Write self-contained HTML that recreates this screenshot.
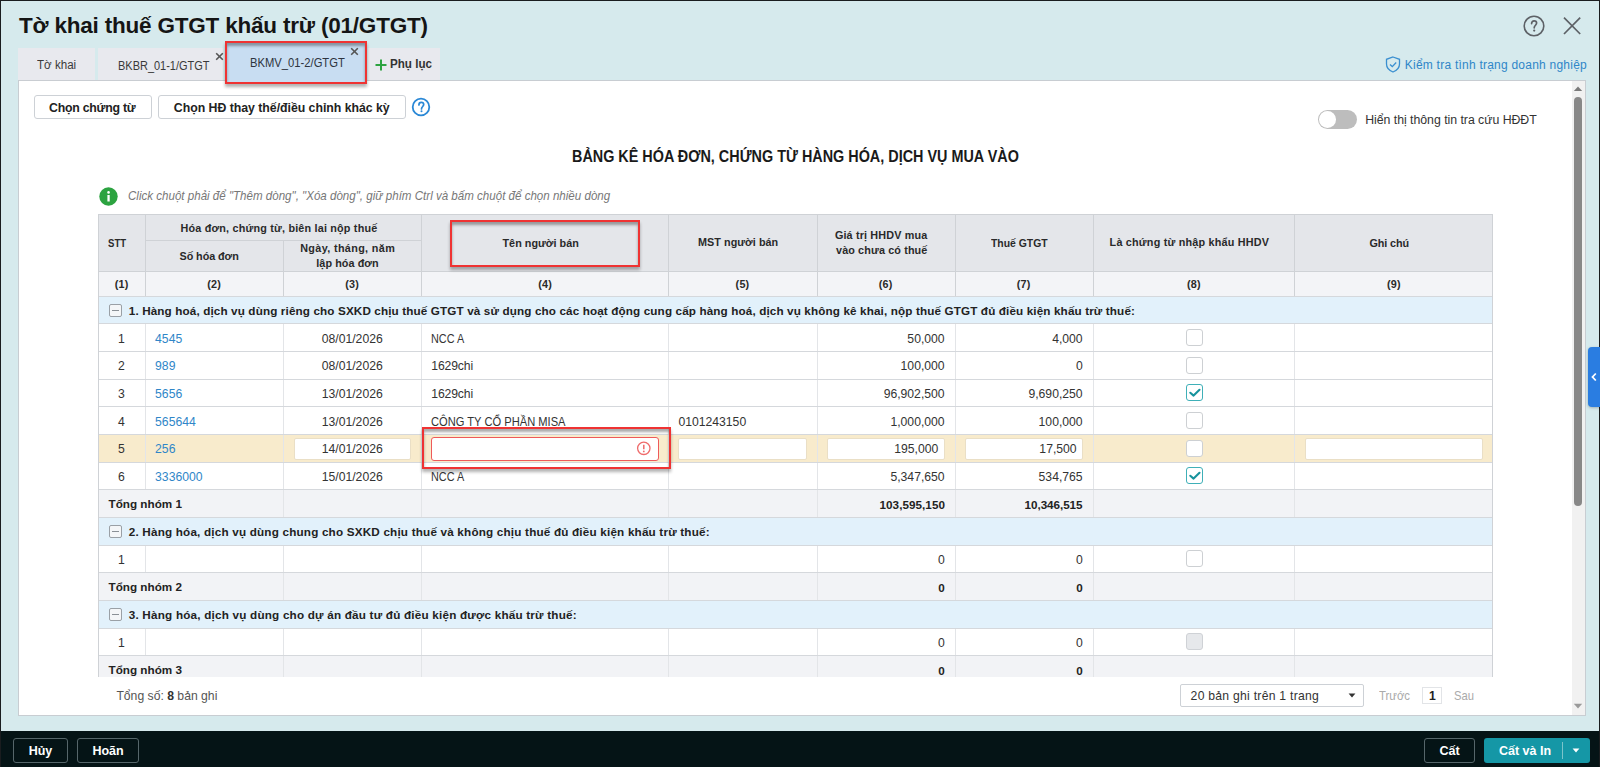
<!DOCTYPE html>
<html><head><meta charset="utf-8"><style>
html,body{margin:0;padding:0;}
body{width:1600px;height:767px;overflow:hidden;position:relative;background:#d6eaed;font-family:"Liberation Sans",sans-serif;}
body>div{position:absolute;}
.t{white-space:nowrap;line-height:1;}
</style></head><body>
<div style="left:18.00px;top:80.00px;width:1568.00px;height:636.00px;background:#fff;border:1px solid #c8cdd2;box-sizing:border-box;"></div>
<div style="left:18.00px;top:48.00px;width:76.50px;height:32.50px;background:#e8e9ee;"></div>
<div style="left:97.50px;top:48.00px;width:125.50px;height:32.50px;background:#e8e9ee;"></div>
<div style="left:368.00px;top:48.00px;width:72.00px;height:32.50px;background:#e8e9ee;"></div>
<div style="left:18.00px;top:80.00px;width:422.00px;height:1.00px;background:#c9cdd2;"></div>
<div style="left:227.00px;top:43.00px;width:137.50px;height:38.50px;background:#c8ddf2;"></div>
<div class="t" style="left:19.00px;top:15.00px;font-size:22.5px;color:#151515;font-weight:700;letter-spacing:-0.201px;">Tờ khai thuế GTGT khấu trừ (01/GTGT)</div>
<div class="t" style="left:37.00px;top:59.00px;font-size:12.5px;color:#3a3a3a;transform:scaleX(0.9278);transform-origin:0.00px 0;">Tờ khai</div>
<div class="t" style="left:117.50px;top:60.00px;font-size:12.5px;color:#3a3a3a;transform:scaleX(0.8782);transform-origin:0.00px 0;">BKBR_01-1/GTGT</div>
<div class="t" style="left:249.50px;top:57.00px;font-size:12.5px;color:#2e3440;transform:scaleX(0.8980);transform-origin:0.00px 0;">BKMV_01-2/GTGT</div>
<div class="t" style="left:390.00px;top:58.00px;font-size:12.5px;color:#333;font-weight:700;transform:scaleX(0.9307);transform-origin:0.00px 0;">Phụ lục</div>
<div class="t" style="left:1404.80px;top:59.00px;font-size:12.0px;color:#2f86c8;letter-spacing:0.230px;">Kiểm tra tình trạng doanh nghiệp</div>
<div style="left:33.50px;top:95.30px;width:118.50px;height:24.20px;border:1px solid #cdd1d6;border-radius:3px;background:#fff;box-sizing:border-box;"></div>
<div style="left:158.30px;top:95.30px;width:247.50px;height:24.20px;border:1px solid #cdd1d6;border-radius:3px;background:#fff;box-sizing:border-box;"></div>
<div class="t" style="left:49.10px;top:102.00px;font-size:12.3px;color:#222;font-weight:700;letter-spacing:-0.245px;">Chọn chứng từ</div>
<div class="t" style="left:173.80px;top:102.00px;font-size:12.3px;color:#222;font-weight:700;letter-spacing:-0.020px;">Chọn HĐ thay thế/điều chỉnh khác kỳ</div>
<div class="t" style="left:1365.20px;top:114.00px;font-size:12.3px;color:#333;letter-spacing:-0.024px;">Hiển thị thông tin tra cứu HĐĐT</div>
<div class="t" style="left:571.90px;top:148.00px;font-size:16.5px;color:#1a1a1a;font-weight:700;transform:scaleX(0.8722);transform-origin:0.00px 0;">BẢNG KÊ HÓA ĐƠN, CHỨNG TỪ HÀNG HÓA, DỊCH VỤ MUA VÀO</div>
<div class="t" style="left:127.50px;top:190.00px;font-size:12.2px;color:#777;font-style:italic;transform:scaleX(0.9490);transform-origin:0.00px 0;">Click chuột phải để &quot;Thêm dòng&quot;, &quot;Xóa dòng&quot;, giữ phím Ctrl và bấm chuột để chọn nhiều dòng</div>
<div style="left:98.00px;top:214.00px;width:1394.60px;height:57.00px;background:#e4e6ea;"></div>
<div style="left:98.00px;top:271.00px;width:1394.60px;height:25.20px;background:#f3f4f7;"></div>
<div style="left:98.00px;top:296.20px;width:1394.60px;height:27.65px;background:#e2f1fb;"></div>
<div style="left:98.00px;top:323.85px;width:1394.60px;height:27.65px;background:#ffffff;"></div>
<div style="left:98.00px;top:351.50px;width:1394.60px;height:27.65px;background:#ffffff;"></div>
<div style="left:98.00px;top:379.15px;width:1394.60px;height:27.65px;background:#ffffff;"></div>
<div style="left:98.00px;top:406.80px;width:1394.60px;height:27.65px;background:#ffffff;"></div>
<div style="left:98.00px;top:434.45px;width:1394.60px;height:27.65px;background:#f8ebcc;"></div>
<div style="left:98.00px;top:462.10px;width:1394.60px;height:27.65px;background:#ffffff;"></div>
<div style="left:98.00px;top:489.75px;width:1394.60px;height:27.65px;background:#f2f3f6;"></div>
<div style="left:98.00px;top:517.40px;width:1394.60px;height:27.65px;background:#e2f1fb;"></div>
<div style="left:98.00px;top:545.05px;width:1394.60px;height:27.65px;background:#ffffff;"></div>
<div style="left:98.00px;top:572.70px;width:1394.60px;height:27.65px;background:#f2f3f6;"></div>
<div style="left:98.00px;top:600.35px;width:1394.60px;height:27.65px;background:#e2f1fb;"></div>
<div style="left:98.00px;top:628.00px;width:1394.60px;height:27.65px;background:#ffffff;"></div>
<div style="left:98.00px;top:655.65px;width:1394.60px;height:21.35px;background:#f2f3f6;"></div>
<div style="left:98.00px;top:214.00px;width:1394.60px;height:1.00px;background:#cfd2d6;"></div>
<div style="left:145.00px;top:240.00px;width:276.00px;height:1.00px;background:#cfd2d6;"></div>
<div style="left:98.00px;top:270.50px;width:1394.60px;height:1.00px;background:#cfd2d6;"></div>
<div style="left:98.00px;top:295.70px;width:1394.60px;height:1.00px;background:#d5d8dc;"></div>
<div style="left:98.00px;top:323.35px;width:1394.60px;height:1.00px;background:#d5d8dc;"></div>
<div style="left:98.00px;top:351.00px;width:1394.60px;height:1.00px;background:#d5d8dc;"></div>
<div style="left:98.00px;top:378.65px;width:1394.60px;height:1.00px;background:#d5d8dc;"></div>
<div style="left:98.00px;top:406.30px;width:1394.60px;height:1.00px;background:#d5d8dc;"></div>
<div style="left:98.00px;top:433.95px;width:1394.60px;height:1.00px;background:#d5d8dc;"></div>
<div style="left:98.00px;top:461.60px;width:1394.60px;height:1.00px;background:#d5d8dc;"></div>
<div style="left:98.00px;top:489.25px;width:1394.60px;height:1.00px;background:#d5d8dc;"></div>
<div style="left:98.00px;top:516.90px;width:1394.60px;height:1.00px;background:#d5d8dc;"></div>
<div style="left:98.00px;top:544.55px;width:1394.60px;height:1.00px;background:#d5d8dc;"></div>
<div style="left:98.00px;top:572.20px;width:1394.60px;height:1.00px;background:#d5d8dc;"></div>
<div style="left:98.00px;top:599.85px;width:1394.60px;height:1.00px;background:#d5d8dc;"></div>
<div style="left:98.00px;top:627.50px;width:1394.60px;height:1.00px;background:#d5d8dc;"></div>
<div style="left:98.00px;top:655.15px;width:1394.60px;height:1.00px;background:#d5d8dc;"></div>
<div style="left:97.50px;top:214.00px;width:1.00px;height:463.00px;background:#cfd2d6;"></div>
<div style="left:144.50px;top:214.00px;width:1.00px;height:82.20px;background:#cfd2d6;"></div>
<div style="left:282.50px;top:240.00px;width:1.00px;height:56.20px;background:#cfd2d6;"></div>
<div style="left:420.50px;top:214.00px;width:1.00px;height:82.20px;background:#cfd2d6;"></div>
<div style="left:667.50px;top:214.00px;width:1.00px;height:82.20px;background:#cfd2d6;"></div>
<div style="left:816.50px;top:214.00px;width:1.00px;height:82.20px;background:#cfd2d6;"></div>
<div style="left:954.50px;top:214.00px;width:1.00px;height:82.20px;background:#cfd2d6;"></div>
<div style="left:1092.50px;top:214.00px;width:1.00px;height:82.20px;background:#cfd2d6;"></div>
<div style="left:1294.00px;top:214.00px;width:1.00px;height:82.20px;background:#cfd2d6;"></div>
<div style="left:1492.10px;top:214.00px;width:1.00px;height:463.00px;background:#cfd2d6;"></div>
<div style="left:144.50px;top:324.35px;width:1.00px;height:26.65px;background:#e3e5e8;"></div>
<div style="left:282.50px;top:324.35px;width:1.00px;height:26.65px;background:#e3e5e8;"></div>
<div style="left:420.50px;top:324.35px;width:1.00px;height:26.65px;background:#e3e5e8;"></div>
<div style="left:667.50px;top:324.35px;width:1.00px;height:26.65px;background:#e3e5e8;"></div>
<div style="left:816.50px;top:324.35px;width:1.00px;height:26.65px;background:#e3e5e8;"></div>
<div style="left:954.50px;top:324.35px;width:1.00px;height:26.65px;background:#e3e5e8;"></div>
<div style="left:1092.50px;top:324.35px;width:1.00px;height:26.65px;background:#e3e5e8;"></div>
<div style="left:1294.00px;top:324.35px;width:1.00px;height:26.65px;background:#e3e5e8;"></div>
<div style="left:144.50px;top:352.00px;width:1.00px;height:26.65px;background:#e3e5e8;"></div>
<div style="left:282.50px;top:352.00px;width:1.00px;height:26.65px;background:#e3e5e8;"></div>
<div style="left:420.50px;top:352.00px;width:1.00px;height:26.65px;background:#e3e5e8;"></div>
<div style="left:667.50px;top:352.00px;width:1.00px;height:26.65px;background:#e3e5e8;"></div>
<div style="left:816.50px;top:352.00px;width:1.00px;height:26.65px;background:#e3e5e8;"></div>
<div style="left:954.50px;top:352.00px;width:1.00px;height:26.65px;background:#e3e5e8;"></div>
<div style="left:1092.50px;top:352.00px;width:1.00px;height:26.65px;background:#e3e5e8;"></div>
<div style="left:1294.00px;top:352.00px;width:1.00px;height:26.65px;background:#e3e5e8;"></div>
<div style="left:144.50px;top:379.65px;width:1.00px;height:26.65px;background:#e3e5e8;"></div>
<div style="left:282.50px;top:379.65px;width:1.00px;height:26.65px;background:#e3e5e8;"></div>
<div style="left:420.50px;top:379.65px;width:1.00px;height:26.65px;background:#e3e5e8;"></div>
<div style="left:667.50px;top:379.65px;width:1.00px;height:26.65px;background:#e3e5e8;"></div>
<div style="left:816.50px;top:379.65px;width:1.00px;height:26.65px;background:#e3e5e8;"></div>
<div style="left:954.50px;top:379.65px;width:1.00px;height:26.65px;background:#e3e5e8;"></div>
<div style="left:1092.50px;top:379.65px;width:1.00px;height:26.65px;background:#e3e5e8;"></div>
<div style="left:1294.00px;top:379.65px;width:1.00px;height:26.65px;background:#e3e5e8;"></div>
<div style="left:144.50px;top:407.30px;width:1.00px;height:26.65px;background:#e3e5e8;"></div>
<div style="left:282.50px;top:407.30px;width:1.00px;height:26.65px;background:#e3e5e8;"></div>
<div style="left:420.50px;top:407.30px;width:1.00px;height:26.65px;background:#e3e5e8;"></div>
<div style="left:667.50px;top:407.30px;width:1.00px;height:26.65px;background:#e3e5e8;"></div>
<div style="left:816.50px;top:407.30px;width:1.00px;height:26.65px;background:#e3e5e8;"></div>
<div style="left:954.50px;top:407.30px;width:1.00px;height:26.65px;background:#e3e5e8;"></div>
<div style="left:1092.50px;top:407.30px;width:1.00px;height:26.65px;background:#e3e5e8;"></div>
<div style="left:1294.00px;top:407.30px;width:1.00px;height:26.65px;background:#e3e5e8;"></div>
<div style="left:144.50px;top:434.95px;width:1.00px;height:26.65px;background:#e3e5e8;"></div>
<div style="left:282.50px;top:434.95px;width:1.00px;height:26.65px;background:#e3e5e8;"></div>
<div style="left:420.50px;top:434.95px;width:1.00px;height:26.65px;background:#e3e5e8;"></div>
<div style="left:667.50px;top:434.95px;width:1.00px;height:26.65px;background:#e3e5e8;"></div>
<div style="left:816.50px;top:434.95px;width:1.00px;height:26.65px;background:#e3e5e8;"></div>
<div style="left:954.50px;top:434.95px;width:1.00px;height:26.65px;background:#e3e5e8;"></div>
<div style="left:1092.50px;top:434.95px;width:1.00px;height:26.65px;background:#e3e5e8;"></div>
<div style="left:1294.00px;top:434.95px;width:1.00px;height:26.65px;background:#e3e5e8;"></div>
<div style="left:144.50px;top:462.60px;width:1.00px;height:26.65px;background:#e3e5e8;"></div>
<div style="left:282.50px;top:462.60px;width:1.00px;height:26.65px;background:#e3e5e8;"></div>
<div style="left:420.50px;top:462.60px;width:1.00px;height:26.65px;background:#e3e5e8;"></div>
<div style="left:667.50px;top:462.60px;width:1.00px;height:26.65px;background:#e3e5e8;"></div>
<div style="left:816.50px;top:462.60px;width:1.00px;height:26.65px;background:#e3e5e8;"></div>
<div style="left:954.50px;top:462.60px;width:1.00px;height:26.65px;background:#e3e5e8;"></div>
<div style="left:1092.50px;top:462.60px;width:1.00px;height:26.65px;background:#e3e5e8;"></div>
<div style="left:1294.00px;top:462.60px;width:1.00px;height:26.65px;background:#e3e5e8;"></div>
<div style="left:282.50px;top:490.25px;width:1.00px;height:26.65px;background:#e3e5e8;"></div>
<div style="left:420.50px;top:490.25px;width:1.00px;height:26.65px;background:#e3e5e8;"></div>
<div style="left:667.50px;top:490.25px;width:1.00px;height:26.65px;background:#e3e5e8;"></div>
<div style="left:816.50px;top:490.25px;width:1.00px;height:26.65px;background:#e3e5e8;"></div>
<div style="left:954.50px;top:490.25px;width:1.00px;height:26.65px;background:#e3e5e8;"></div>
<div style="left:1092.50px;top:490.25px;width:1.00px;height:26.65px;background:#e3e5e8;"></div>
<div style="left:1294.00px;top:490.25px;width:1.00px;height:26.65px;background:#e3e5e8;"></div>
<div style="left:144.50px;top:545.55px;width:1.00px;height:26.65px;background:#e3e5e8;"></div>
<div style="left:282.50px;top:545.55px;width:1.00px;height:26.65px;background:#e3e5e8;"></div>
<div style="left:420.50px;top:545.55px;width:1.00px;height:26.65px;background:#e3e5e8;"></div>
<div style="left:667.50px;top:545.55px;width:1.00px;height:26.65px;background:#e3e5e8;"></div>
<div style="left:816.50px;top:545.55px;width:1.00px;height:26.65px;background:#e3e5e8;"></div>
<div style="left:954.50px;top:545.55px;width:1.00px;height:26.65px;background:#e3e5e8;"></div>
<div style="left:1092.50px;top:545.55px;width:1.00px;height:26.65px;background:#e3e5e8;"></div>
<div style="left:1294.00px;top:545.55px;width:1.00px;height:26.65px;background:#e3e5e8;"></div>
<div style="left:282.50px;top:573.20px;width:1.00px;height:26.65px;background:#e3e5e8;"></div>
<div style="left:420.50px;top:573.20px;width:1.00px;height:26.65px;background:#e3e5e8;"></div>
<div style="left:667.50px;top:573.20px;width:1.00px;height:26.65px;background:#e3e5e8;"></div>
<div style="left:816.50px;top:573.20px;width:1.00px;height:26.65px;background:#e3e5e8;"></div>
<div style="left:954.50px;top:573.20px;width:1.00px;height:26.65px;background:#e3e5e8;"></div>
<div style="left:1092.50px;top:573.20px;width:1.00px;height:26.65px;background:#e3e5e8;"></div>
<div style="left:1294.00px;top:573.20px;width:1.00px;height:26.65px;background:#e3e5e8;"></div>
<div style="left:144.50px;top:628.50px;width:1.00px;height:26.65px;background:#e3e5e8;"></div>
<div style="left:282.50px;top:628.50px;width:1.00px;height:26.65px;background:#e3e5e8;"></div>
<div style="left:420.50px;top:628.50px;width:1.00px;height:26.65px;background:#e3e5e8;"></div>
<div style="left:667.50px;top:628.50px;width:1.00px;height:26.65px;background:#e3e5e8;"></div>
<div style="left:816.50px;top:628.50px;width:1.00px;height:26.65px;background:#e3e5e8;"></div>
<div style="left:954.50px;top:628.50px;width:1.00px;height:26.65px;background:#e3e5e8;"></div>
<div style="left:1092.50px;top:628.50px;width:1.00px;height:26.65px;background:#e3e5e8;"></div>
<div style="left:1294.00px;top:628.50px;width:1.00px;height:26.65px;background:#e3e5e8;"></div>
<div style="left:282.50px;top:656.15px;width:1.00px;height:20.85px;background:#e3e5e8;"></div>
<div style="left:420.50px;top:656.15px;width:1.00px;height:20.85px;background:#e3e5e8;"></div>
<div style="left:667.50px;top:656.15px;width:1.00px;height:20.85px;background:#e3e5e8;"></div>
<div style="left:816.50px;top:656.15px;width:1.00px;height:20.85px;background:#e3e5e8;"></div>
<div style="left:954.50px;top:656.15px;width:1.00px;height:20.85px;background:#e3e5e8;"></div>
<div style="left:1092.50px;top:656.15px;width:1.00px;height:20.85px;background:#e3e5e8;"></div>
<div style="left:1294.00px;top:656.15px;width:1.00px;height:20.85px;background:#e3e5e8;"></div>
<div class="t" style="left:107.70px;top:238.00px;font-size:10.8px;color:#2a2a2a;font-weight:700;transform:scaleX(0.8867);transform-origin:0.00px 0;">STT</div>
<div class="t" style="left:180.50px;top:223.00px;font-size:10.8px;color:#2a2a2a;font-weight:700;letter-spacing:0.190px;">Hóa đơn, chứng từ, biên lai nộp thuế</div>
<div class="t" style="left:179.50px;top:251.00px;font-size:10.8px;color:#2a2a2a;font-weight:700;letter-spacing:-0.065px;">Số hóa đơn</div>
<div class="t" style="left:300.20px;top:243.00px;font-size:10.8px;color:#2a2a2a;font-weight:700;letter-spacing:0.359px;">Ngày, tháng, năm</div>
<div class="t" style="left:316.30px;top:258.00px;font-size:10.8px;color:#2a2a2a;font-weight:700;letter-spacing:0.073px;">lập hóa đơn</div>
<div class="t" style="left:502.50px;top:238.00px;font-size:10.8px;color:#2a2a2a;font-weight:700;letter-spacing:0.018px;">Tên người bán</div>
<div class="t" style="left:698.10px;top:237.00px;font-size:10.8px;color:#2a2a2a;font-weight:700;letter-spacing:0.033px;">MST người bán</div>
<div class="t" style="left:834.90px;top:230.00px;font-size:10.8px;color:#2a2a2a;font-weight:700;letter-spacing:0.158px;">Giá trị HHDV mua</div>
<div class="t" style="left:836.00px;top:245.00px;font-size:10.8px;color:#2a2a2a;font-weight:700;letter-spacing:0.128px;">vào chưa có thuế</div>
<div class="t" style="left:991.30px;top:238.00px;font-size:10.8px;color:#2a2a2a;font-weight:700;transform:scaleX(0.9642);transform-origin:0.00px 0;">Thuế GTGT</div>
<div class="t" style="left:1109.60px;top:237.00px;font-size:10.8px;color:#2a2a2a;font-weight:700;letter-spacing:0.205px;">Là chứng từ nhập khẩu HHDV</div>
<div class="t" style="left:1369.50px;top:238.00px;font-size:10.8px;color:#2a2a2a;font-weight:700;letter-spacing:-0.096px;">Ghi chú</div>
<div class="t" style="left:114.80px;top:279.00px;font-size:10.8px;color:#2a2a2a;font-weight:700;letter-spacing:0.212px;">(1)</div>
<div class="t" style="left:207.20px;top:279.00px;font-size:10.8px;color:#2a2a2a;font-weight:700;letter-spacing:0.212px;">(2)</div>
<div class="t" style="left:345.20px;top:279.00px;font-size:10.8px;color:#2a2a2a;font-weight:700;letter-spacing:0.212px;">(3)</div>
<div class="t" style="left:538.20px;top:279.00px;font-size:10.8px;color:#2a2a2a;font-weight:700;letter-spacing:0.212px;">(4)</div>
<div class="t" style="left:735.60px;top:279.00px;font-size:10.8px;color:#2a2a2a;font-weight:700;letter-spacing:0.212px;">(5)</div>
<div class="t" style="left:878.80px;top:279.00px;font-size:10.8px;color:#2a2a2a;font-weight:700;letter-spacing:0.212px;">(6)</div>
<div class="t" style="left:1016.80px;top:279.00px;font-size:10.8px;color:#2a2a2a;font-weight:700;letter-spacing:0.212px;">(7)</div>
<div class="t" style="left:1187.00px;top:279.00px;font-size:10.8px;color:#2a2a2a;font-weight:700;letter-spacing:0.212px;">(8)</div>
<div class="t" style="left:1387.00px;top:279.00px;font-size:10.8px;color:#2a2a2a;font-weight:700;letter-spacing:0.212px;">(9)</div>
<div class="t" style="left:128.75px;top:305.00px;font-size:11.7px;color:#222;font-weight:700;letter-spacing:0.130px;">1. Hàng hoá, dịch vụ dùng riêng cho SXKD chịu thuế GTGT và sử dụng cho các hoạt động cung cấp hàng hoá, dịch vụ không kê khai, nộp thuế GTGT đủ điều kiện khấu trừ thuế:</div>
<div style="left:109.00px;top:303.60px;width:13.00px;height:13.00px;border:1px solid #9aa0a6;border-radius:2px;background:#f4f6f8;box-sizing:border-box;"></div>
<div style="left:112.00px;top:309.60px;width:7.00px;height:1.00px;background:#8a9096;"></div>
<div class="t" style="left:128.75px;top:526.00px;font-size:11.7px;color:#222;font-weight:700;letter-spacing:0.193px;">2. Hàng hóa, dịch vụ dùng chung cho SXKD chịu thuế và không chịu thuế đủ điều kiện khấu trừ thuế:</div>
<div style="left:109.00px;top:524.80px;width:13.00px;height:13.00px;border:1px solid #9aa0a6;border-radius:2px;background:#f4f6f8;box-sizing:border-box;"></div>
<div style="left:112.00px;top:530.80px;width:7.00px;height:1.00px;background:#8a9096;"></div>
<div class="t" style="left:128.75px;top:609.00px;font-size:11.7px;color:#222;font-weight:700;letter-spacing:0.209px;">3. Hàng hóa, dịch vụ dùng cho dự án đầu tư đủ điều kiện được khấu trừ thuế:</div>
<div style="left:109.00px;top:607.75px;width:13.00px;height:13.00px;border:1px solid #9aa0a6;border-radius:2px;background:#f4f6f8;box-sizing:border-box;"></div>
<div style="left:112.00px;top:613.75px;width:7.00px;height:1.00px;background:#8a9096;"></div>
<div class="t" style="left:907.37px;top:333.00px;font-size:12.2px;color:#333;">50,000</div>
<div class="t" style="left:1052.14px;top:333.00px;font-size:12.2px;color:#333;">4,000</div>
<div class="t" style="left:118.01px;top:333.00px;font-size:12.2px;color:#333;">1</div>
<div class="t" style="left:155.10px;top:333.00px;font-size:12.2px;color:#2f86c8;">4545</div>
<div class="t" style="left:321.72px;top:333.00px;font-size:12.2px;color:#333;">08/01/2026</div>
<div class="t" style="left:431.30px;top:333.00px;font-size:12.2px;color:#333;transform:scaleX(0.8920);transform-origin:0.00px 0;">NCC A</div>
<div style="left:1185.70px;top:329.15px;width:17.00px;height:17.00px;border:1.3px solid #cdd0d3;border-radius:3px;background:#fff;box-sizing:border-box;"></div>
<div class="t" style="left:900.60px;top:360.00px;font-size:12.2px;color:#333;">100,000</div>
<div class="t" style="left:1075.93px;top:360.00px;font-size:12.2px;color:#333;">0</div>
<div class="t" style="left:118.01px;top:360.00px;font-size:12.2px;color:#333;">2</div>
<div class="t" style="left:155.10px;top:360.00px;font-size:12.2px;color:#2f86c8;">989</div>
<div class="t" style="left:321.72px;top:360.00px;font-size:12.2px;color:#333;">08/01/2026</div>
<div class="t" style="left:431.30px;top:360.00px;font-size:12.2px;color:#333;letter-spacing:-0.144px;">1629chi</div>
<div style="left:1185.70px;top:356.80px;width:17.00px;height:17.00px;border:1.3px solid #cdd0d3;border-radius:3px;background:#fff;box-sizing:border-box;"></div>
<div class="t" style="left:883.64px;top:388.00px;font-size:12.2px;color:#333;">96,902,500</div>
<div class="t" style="left:1028.41px;top:388.00px;font-size:12.2px;color:#333;">9,690,250</div>
<div class="t" style="left:118.01px;top:388.00px;font-size:12.2px;color:#333;">3</div>
<div class="t" style="left:155.10px;top:388.00px;font-size:12.2px;color:#2f86c8;">5656</div>
<div class="t" style="left:321.72px;top:388.00px;font-size:12.2px;color:#333;">13/01/2026</div>
<div class="t" style="left:431.30px;top:388.00px;font-size:12.2px;color:#333;letter-spacing:-0.144px;">1629chi</div>
<div style="left:1185.70px;top:384.45px;width:17.00px;height:17.00px;border:1.3px solid #3fb0b8;border-radius:3px;background:#fff;box-sizing:border-box;"></div>
<svg style="position:absolute;left:1185.70px;top:384.45px" width="17" height="17" viewBox="0 0 17 17"><path d="M4.3 8.8 L7.6 11.6 L13.5 5.8" fill="none" stroke="#17939d" stroke-width="2.1" stroke-linecap="round" stroke-linejoin="round"/></svg>
<div class="t" style="left:890.41px;top:416.00px;font-size:12.2px;color:#333;">1,000,000</div>
<div class="t" style="left:1038.60px;top:416.00px;font-size:12.2px;color:#333;">100,000</div>
<div class="t" style="left:118.01px;top:416.00px;font-size:12.2px;color:#333;">4</div>
<div class="t" style="left:155.10px;top:416.00px;font-size:12.2px;color:#2f86c8;">565644</div>
<div class="t" style="left:321.72px;top:416.00px;font-size:12.2px;color:#333;">13/01/2026</div>
<div class="t" style="left:431.30px;top:416.00px;font-size:12.2px;color:#333;transform:scaleX(0.9140);transform-origin:0.00px 0;">CÔNG TY CỔ PHẦN MISA</div>
<div class="t" style="left:678.40px;top:416.00px;font-size:12.2px;color:#333;">0101243150</div>
<div style="left:1185.70px;top:412.10px;width:17.00px;height:17.00px;border:1.3px solid #cdd0d3;border-radius:3px;background:#fff;box-sizing:border-box;"></div>
<div style="left:293.75px;top:437.85px;width:117.50px;height:22.60px;background:#fff;border:1px solid #eadfc6;box-sizing:border-box;border-radius:2px;"></div>
<div style="left:677.90px;top:437.85px;width:129.20px;height:22.60px;background:#fff;border:1px solid #eadfc6;box-sizing:border-box;border-radius:2px;"></div>
<div style="left:827.20px;top:437.85px;width:117.50px;height:22.60px;background:#fff;border:1px solid #eadfc6;box-sizing:border-box;border-radius:2px;"></div>
<div style="left:965.30px;top:437.85px;width:117.40px;height:22.60px;background:#fff;border:1px solid #eadfc6;box-sizing:border-box;border-radius:2px;"></div>
<div style="left:1305.00px;top:437.85px;width:178.00px;height:22.60px;background:#fff;border:1px solid #eadfc6;box-sizing:border-box;border-radius:2px;"></div>
<div style="left:430.75px;top:436.55px;width:228.00px;height:24.20px;background:#fff;border:1px solid #ee5a5a;box-sizing:border-box;border-radius:3px;"></div>
<svg style="position:absolute;left:636px;top:441.15px" width="16" height="16" viewBox="0 0 16 16"><circle cx="7.8" cy="7.3" r="6.2" fill="none" stroke="#ef6b6b" stroke-width="1.3"/><path d="M7.8 3.8 V8.3" stroke="#ef6b6b" stroke-width="1.5"/><circle cx="7.8" cy="10.4" r="0.9" fill="#ef6b6b"/></svg>
<div class="t" style="left:894.20px;top:443.00px;font-size:12.2px;color:#333;">195,000</div>
<div class="t" style="left:1039.37px;top:443.00px;font-size:12.2px;color:#333;">17,500</div>
<div class="t" style="left:118.01px;top:443.00px;font-size:12.2px;color:#333;">5</div>
<div class="t" style="left:155.10px;top:443.00px;font-size:12.2px;color:#2f86c8;">256</div>
<div class="t" style="left:321.72px;top:443.00px;font-size:12.2px;color:#333;">14/01/2026</div>
<div style="left:1185.70px;top:439.75px;width:17.00px;height:17.00px;border:1.3px solid #cdd0d3;border-radius:3px;background:#fff;box-sizing:border-box;"></div>
<div class="t" style="left:890.41px;top:471.00px;font-size:12.2px;color:#333;">5,347,650</div>
<div class="t" style="left:1038.60px;top:471.00px;font-size:12.2px;color:#333;">534,765</div>
<div class="t" style="left:118.01px;top:471.00px;font-size:12.2px;color:#333;">6</div>
<div class="t" style="left:155.10px;top:471.00px;font-size:12.2px;color:#2f86c8;">3336000</div>
<div class="t" style="left:321.72px;top:471.00px;font-size:12.2px;color:#333;">15/01/2026</div>
<div class="t" style="left:431.30px;top:471.00px;font-size:12.2px;color:#333;transform:scaleX(0.8920);transform-origin:0.00px 0;">NCC A</div>
<div style="left:1185.70px;top:467.40px;width:17.00px;height:17.00px;border:1.3px solid #3fb0b8;border-radius:3px;background:#fff;box-sizing:border-box;"></div>
<svg style="position:absolute;left:1185.70px;top:467.40px" width="17" height="17" viewBox="0 0 17 17"><path d="M4.3 8.8 L7.6 11.6 L13.5 5.8" fill="none" stroke="#17939d" stroke-width="2.1" stroke-linecap="round" stroke-linejoin="round"/></svg>
<div class="t" style="left:108.50px;top:498.00px;font-size:11.7px;color:#222;font-weight:700;letter-spacing:0.008px;">Tổng nhóm 1</div>
<div class="t" style="left:879.50px;top:499.00px;font-size:11.7px;color:#222;font-weight:700;letter-spacing:0.045px;">103,595,150</div>
<div class="t" style="left:1024.60px;top:499.00px;font-size:11.7px;color:#222;font-weight:700;letter-spacing:-0.062px;">10,346,515</div>
<div class="t" style="left:108.50px;top:581.00px;font-size:11.7px;color:#222;font-weight:700;letter-spacing:0.008px;">Tổng nhóm 2</div>
<div class="t" style="left:938.21px;top:582.00px;font-size:11.7px;color:#222;font-weight:700;">0</div>
<div class="t" style="left:1076.21px;top:582.00px;font-size:11.7px;color:#222;font-weight:700;">0</div>
<div class="t" style="left:108.50px;top:664.00px;font-size:11.7px;color:#222;font-weight:700;letter-spacing:0.008px;">Tổng nhóm 3</div>
<div class="t" style="left:938.21px;top:665.00px;font-size:11.7px;color:#222;font-weight:700;">0</div>
<div class="t" style="left:1076.21px;top:665.00px;font-size:11.7px;color:#222;font-weight:700;">0</div>
<div class="t" style="left:118.01px;top:554.00px;font-size:12.2px;color:#333;">1</div>
<div class="t" style="left:937.93px;top:554.00px;font-size:12.2px;color:#333;">0</div>
<div class="t" style="left:1075.93px;top:554.00px;font-size:12.2px;color:#333;">0</div>
<div style="left:1185.70px;top:550.35px;width:17.00px;height:17.00px;border:1.3px solid #cdd0d3;border-radius:3px;background:#fff;box-sizing:border-box;"></div>
<div class="t" style="left:118.01px;top:637.00px;font-size:12.2px;color:#333;">1</div>
<div class="t" style="left:937.93px;top:637.00px;font-size:12.2px;color:#333;">0</div>
<div class="t" style="left:1075.93px;top:637.00px;font-size:12.2px;color:#333;">0</div>
<div style="left:1185.70px;top:633.30px;width:17.00px;height:17.00px;border:1px solid #cfd2d6;border-radius:3px;background:#e6e8eb;box-sizing:border-box;"></div>
<div class="t" style="left:116.4px;top:690px;font-size:12.2px;color:#555">Tổng số: <b style="color:#333">8</b> bản ghi</div>
<div style="left:1180.00px;top:684.40px;width:183.60px;height:23.00px;border:1px solid #cdd1d6;border-radius:2px;background:#fff;box-sizing:border-box;"></div>
<div class="t" style="left:1190.60px;top:690.00px;font-size:12.2px;color:#333;letter-spacing:0.255px;">20 bản ghi trên 1 trang</div>
<svg style="position:absolute;left:1348px;top:693px" width="8" height="5" viewBox="0 0 8 5"><path d="M0.6 0.5 H7.4 L4 4.6 Z" fill="#333"/></svg>
<div class="t" style="left:1379.00px;top:690.00px;font-size:12.2px;color:#aaa;transform:scaleX(0.9308);transform-origin:0.00px 0;">Trước</div>
<div style="left:1422.40px;top:687.40px;width:20.00px;height:16.60px;border:1px solid #e2e4e7;background:#fff;box-sizing:border-box;"></div>
<div class="t" style="left:1429.01px;top:690.00px;font-size:12.2px;color:#222;font-weight:700;">1</div>
<div class="t" style="left:1454.40px;top:690.00px;font-size:12.2px;color:#aaa;transform:scaleX(0.9210);transform-origin:0.00px 0;">Sau</div>
<div style="left:1571.50px;top:81.00px;width:13.50px;height:634.00px;background:#f1f1f1;"></div>
<svg style="position:absolute;left:1573px;top:86px" width="10" height="6" viewBox="0 0 10 6"><path d="M5 0.5 L9.2 5 H0.8 Z" fill="#7a7a7a"/></svg>
<svg style="position:absolute;left:1573px;top:703px" width="10" height="6" viewBox="0 0 10 6"><path d="M0.8 0.8 H9.2 L5 5.4 Z" fill="#9a9a9a"/></svg>
<div style="left:1574.00px;top:97.00px;width:7.50px;height:408.60px;background:#888;border-radius:4px;"></div>
<div style="left:1317.90px;top:109.60px;width:39.40px;height:19.30px;background:#bdbdbd;border-radius:10px;"></div>
<div style="left:1319.00px;top:110.80px;width:17.30px;height:17.00px;background:#fff;border-radius:50%;"></div>
<svg style="position:absolute;left:99px;top:186.5px" width="19" height="19" viewBox="0 0 19 19"><circle cx="9.5" cy="9.5" r="9.2" fill="#2ca340"/><rect x="8.4" y="8" width="2.3" height="6.5" fill="#fff"/><circle cx="9.55" cy="5.4" r="1.3" fill="#fff"/></svg>
<svg style="position:absolute;left:410.75px;top:97px" width="20" height="20" viewBox="0 0 20 20"><circle cx="10" cy="10" r="8.3" fill="none" stroke="#2a88d6" stroke-width="1.8"/><path d="M7.9 7.9 C7.9 6.3 8.9 5.4 10.3 5.4 C11.8 5.4 12.7 6.4 12.7 7.6 C12.7 9.4 10.5 9.7 10.5 11.9" fill="none" stroke="#2a88d6" stroke-width="1.7" stroke-linecap="round"/><circle cx="10.5" cy="14.2" r="1.0" fill="#2a88d6"/></svg>
<svg style="position:absolute;left:1522px;top:13.5px" width="24" height="24" viewBox="0 0 24 24"><circle cx="12" cy="12" r="9.8" fill="none" stroke="#5d6166" stroke-width="1.6"/><path d="M9.6 9.6 C9.6 7.8 10.7 6.8 12.1 6.8 C13.6 6.8 14.6 7.8 14.6 9.1 C14.6 11.1 12.2 11.4 12.2 13.8" fill="none" stroke="#5d6166" stroke-width="1.7" stroke-linecap="round"/><circle cx="12.2" cy="16.6" r="1.1" fill="#5d6166"/></svg>
<svg style="position:absolute;left:1562px;top:15.5px" width="20" height="20" viewBox="0 0 20 20"><path d="M2 1.7 L18.2 18 M18.2 1.7 L2 18" fill="none" stroke="#5d6166" stroke-width="1.7"/></svg>
<svg style="position:absolute;left:214.5px;top:52px" width="9" height="9" viewBox="0 0 9 9"><path d="M1.2 1.2 L7.8 7.8 M7.8 1.2 L1.2 7.8" stroke="#555" stroke-width="1.6"/></svg>
<svg style="position:absolute;left:350px;top:47.3px" width="9" height="9" viewBox="0 0 9 9"><path d="M1.2 1.2 L7.8 7.8 M7.8 1.2 L1.2 7.8" stroke="#555" stroke-width="1.6"/></svg>
<svg style="position:absolute;left:374.5px;top:58.5px" width="12" height="12" viewBox="0 0 12 12"><path d="M6 0.5 V11.5 M0.5 6 H11.5" stroke="#2ca340" stroke-width="2"/></svg>
<svg style="position:absolute;left:1385px;top:56px" width="16" height="17" viewBox="0 0 16 17"><path d="M8 1 L14.5 3.3 V8 C14.5 12 11.5 14.6 8 16 C4.5 14.6 1.5 12 1.5 8 V3.3 Z" fill="none" stroke="#3a8fd0" stroke-width="1.3"/><path d="M5 8.5 L7.3 10.6 L11.2 6.5" fill="none" stroke="#3a8fd0" stroke-width="1.3"/></svg>
<div style="left:225.00px;top:41.00px;width:141.50px;height:42.60px;border:2.6px solid #ef3333;box-sizing:border-box;box-shadow:0 3px 3px rgba(0,0,0,.3), inset 0 3px 3px rgba(0,0,0,.34);"></div>
<div style="left:449.60px;top:220.00px;width:190.00px;height:46.50px;border:2.6px solid #ef3333;box-sizing:border-box;box-shadow:0 3px 3px rgba(0,0,0,.3), inset 0 3px 3px rgba(0,0,0,.34);"></div>
<div style="left:421.80px;top:427.20px;width:249.50px;height:41.60px;border:2.6px solid #ef3333;box-sizing:border-box;box-shadow:0 3px 3px rgba(0,0,0,.3), inset 0 3px 3px rgba(0,0,0,.34);"></div>
<div style="left:0.00px;top:731.00px;width:1600.00px;height:36.00px;background:#051416;"></div>
<div style="left:13.00px;top:737.50px;width:55.00px;height:25.50px;border:1px solid #56666a;border-radius:3px;box-sizing:border-box;"></div>
<div style="left:77.00px;top:737.50px;width:62.00px;height:25.50px;border:1px solid #56666a;border-radius:3px;box-sizing:border-box;"></div>
<div style="left:1424.30px;top:737.50px;width:50.40px;height:25.00px;border:1px solid #56666a;border-radius:3px;box-sizing:border-box;"></div>
<div style="left:1484.00px;top:737.50px;width:106.00px;height:25.00px;background:#1597a6;border-radius:3px;"></div>
<div style="left:1561.50px;top:741.50px;width:1.00px;height:17.00px;background:#7cc4ca;"></div>
<svg style="position:absolute;left:1572px;top:747.5px" width="8" height="5" viewBox="0 0 8 5"><path d="M0.6 0.5 H7.4 L4 4.5 Z" fill="#fff"/></svg>
<div class="t" style="left:28.69px;top:745.00px;font-size:12.5px;color:#fff;font-weight:700;">Hủy</div>
<div class="t" style="left:92.38px;top:745.00px;font-size:12.5px;color:#fff;font-weight:700;">Hoãn</div>
<div class="t" style="left:1439.44px;top:745.00px;font-size:12.5px;color:#fff;font-weight:700;">Cất</div>
<div class="t" style="left:1498.94px;top:745.00px;font-size:12.5px;color:#fff;font-weight:700;">Cất và In</div>
<div style="left:0.00px;top:0.00px;width:1600.00px;height:1.20px;background:#1a1d1f;"></div>
<div style="left:0.00px;top:0.00px;width:1.30px;height:767.00px;background:#1a1d1f;"></div>
<div style="left:1598.70px;top:0.00px;width:1.30px;height:767.00px;background:#1a1d1f;"></div>
<div style="left:1587.50px;top:347.40px;width:14.50px;height:59.30px;background:#2a7de1;border-radius:4px 0 0 4px;box-shadow:0 1px 3px rgba(0,0,0,.25);"></div>
<svg style="position:absolute;left:1590px;top:372px" width="8" height="10" viewBox="0 0 8 10"><path d="M5.8 1.5 L2.5 5 L5.8 8.5" fill="none" stroke="#fff" stroke-width="1.8"/></svg>
</body></html>
